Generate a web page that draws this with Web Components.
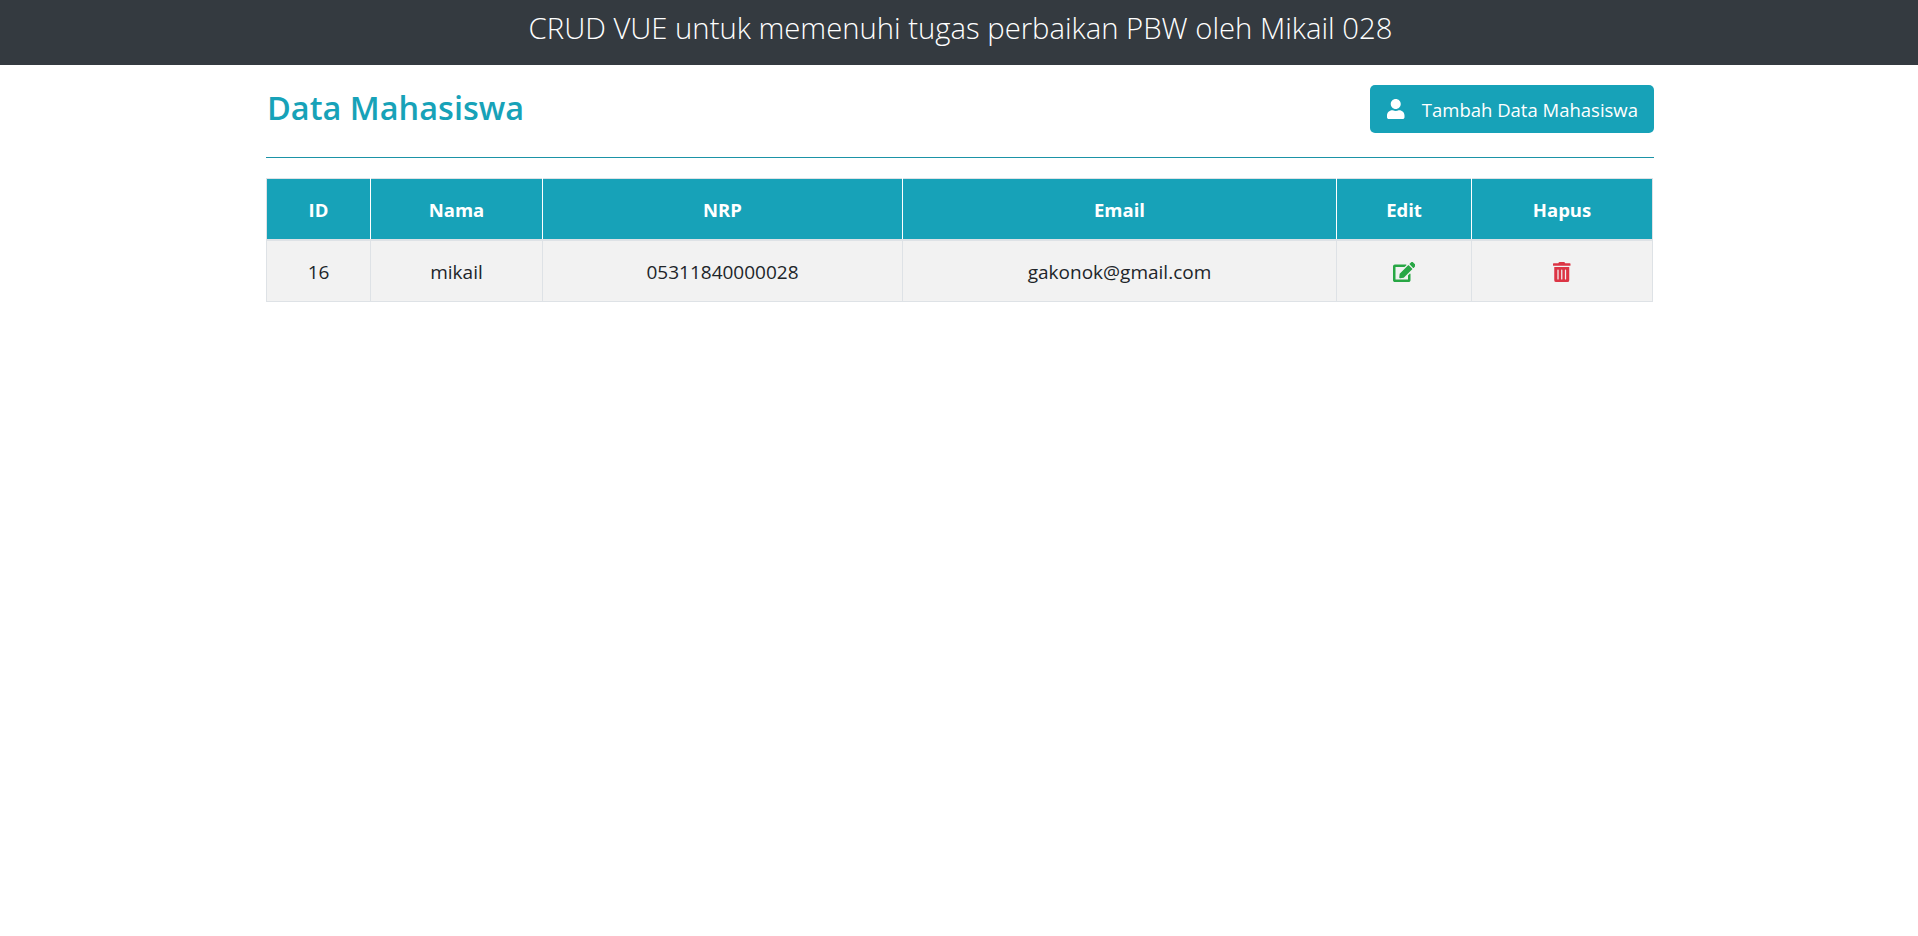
<!DOCTYPE html>
<html>
<head>
<meta charset="utf-8">
<title>CRUD VUE</title>
<style>
  html, body { margin: 0; background: #fff; }
  body { font-family: "Open Sans", "Noto Sans", sans-serif; color: #212529; }
</style>
</head>
<body>
<app-navbar>CRUD VUE untuk memenuhi tugas perbaikan PBW oleh Mikail 028</app-navbar>
<page-main>
  <page-head>
    <span slot="title">Data Mahasiswa</span>
    <add-button>Tambah Data Mahasiswa</add-button>
  </page-head>
  <mhs-table></mhs-table>
</page-main>

<script>
const ICONS = {
  user: ["0 0 448 512", "M224 256c70.7 0 128-57.3 128-128S294.7 0 224 0 96 57.3 96 128s57.3 128 128 128zm89.6 32h-16.7c-22.2 10.2-46.9 16-72.9 16s-50.6-5.8-72.9-16h-16.7C60.2 288 0 348.2 0 422.4V464c0 26.5 21.5 48 48 48h352c26.5 0 48-21.5 48-48v-41.6c0-74.2-60.2-134.4-134.4-134.4z"],
  edit: ["0 0 576 512", "M402.6 83.2l90.2 90.2c3.8 3.8 3.8 10 0 13.8L274.4 405.6l-92.8 10.3c-12.4 1.4-22.9-9.1-21.5-21.5l10.3-92.8L388.8 83.2c3.8-3.8 10-3.8 13.8 0zm162-22.9l-48.8-48.8c-15.2-15.2-39.9-15.2-55.2 0l-35.4 35.4c-3.8 3.8-3.8 10 0 13.8l90.2 90.2c3.8 3.8 10 3.8 13.8 0l35.4-35.4c15.2-15.3 15.2-40 0-55.2zM384 346.2V448H64V128h229.8c3.2 0 6.2-1.3 8.5-3.5l40-40c7.6-7.6 2.2-20.5-8.5-20.5H48C21.5 64 0 85.5 0 112v352c0 26.5 21.5 48 48 48h352c26.5 0 48-21.5 48-48V306.2c0-10.7-12.9-16-20.5-8.5l-40 40c-2.2 2.3-3.5 5.3-3.5 8.5z"],
  trash: ["0 0 448 512", "M32 464a48 48 0 0 0 48 48h288a48 48 0 0 0 48-48V128H32zm272-256a16 16 0 0 1 32 0v224a16 16 0 0 1-32 0zm-96 0a16 16 0 0 1 32 0v224a16 16 0 0 1-32 0zm-96 0a16 16 0 0 1 32 0v224a16 16 0 0 1-32 0zM432 32H312l-9.4-18.7A24 24 0 0 0 281.1 0H166.8a23.72 23.72 0 0 0-21.4 13.3L136 32H16A16 16 0 0 0 0 48v32a16 16 0 0 0 16 16h416a16 16 0 0 0 16-16V48a16 16 0 0 0-16-16z"]
};

function icon(name) {
  const [box, d] = ICONS[name];
  return `<svg viewBox="${box}" height="20" fill="currentColor" aria-hidden="true"><path d="${d}"/></svg>`;
}

class AppNavbar extends HTMLElement {
  constructor() {
    super();
    this.attachShadow({ mode: "open" });
    this.shadowRoot.innerHTML = `
      <style>
        :host {
          display: flex;
          justify-content: center;
          box-sizing: border-box;
          height: 65px;
          padding: 8px 0 0 3px;
          line-height: 40px;
          background: #343a40;
          color: #fff;
          font-size: 29.25px;
          font-weight: 300;
        }
      </style>
      <slot></slot>`;
  }
}

class PageMain extends HTMLElement {
  constructor() {
    super();
    this.attachShadow({ mode: "open" });
    this.shadowRoot.innerHTML = `
      <style>
        :host {
          display: block;
          width: 1388px;
          margin-left: 266px;
          padding-top: 20px;
        }
      </style>
      <slot></slot>`;
  }
}

class PageHead extends HTMLElement {
  constructor() {
    super();
    this.attachShadow({ mode: "open" });
    this.shadowRoot.innerHTML = `
      <style>
        :host {
          display: flex;
          justify-content: space-between;
          align-items: flex-start;
          height: 72px;
          border-bottom: 1px solid #1b93a7;
          margin-bottom: 20px;
          color: #17a2b8;
        }
        .title {
          padding-left: 1px;
          font-size: 32.5px;
          font-weight: 600;
          line-height: 46px;
        }
      </style>
      <div class="title"><slot name="title"></slot></div>
      <slot></slot>`;
  }
}

class AddButton extends HTMLElement {
  constructor() {
    super();
    this.attachShadow({ mode: "open" });
    this.shadowRoot.innerHTML = `
      <style>
        :host {
          display: inline-flex;
          align-items: center;
          gap: 17px;
          box-sizing: border-box;
          height: 48px;
          padding: 0 16px 0 17px;
          border-radius: 5px;
          background: #17a2b8;
          color: #fff;
          font-size: 18.5px;
          cursor: pointer;
        }
      </style>
      ${icon("user")}<slot></slot>`;
  }
}

class MhsTable extends HTMLElement {
  constructor() {
    super();
    this.attachShadow({ mode: "open" });
    const heads = ["ID", "Nama", "NRP", "Email", "Edit", "Hapus"];
    const row = { id: 16, nama: "mikail", nrp: "05311840000028", email: "gakonok@gmail.com" };
    this.shadowRoot.innerHTML = `
      <style>
        :host { display: block; width: 1386px; }
        table {
          width: 100%;
          table-layout: fixed;
          border-collapse: collapse;
          font-size: 19px;
          text-align: center;
        }
        th, td { border: 1px solid #dee2e6; padding: 0; vertical-align: middle; }
        th {
          height: 59px;
          padding-top: 1px;
          border-color: #fff;
          border-top-color: #dee2e6;
          border-bottom: 2px solid #dee2e6;
          background: #17a2b8;
          color: #fff;
          font-size: 18.5px;
          font-weight: 700;
        }
        th:first-child { border-left-color: #dee2e6; }
        th:last-child { border-right-color: #dee2e6; }
        td { height: 59px; padding-top: 1px; background: #f2f2f2; }
        td svg { display: block; margin: 0 auto; }
        .edit { color: #28a745; }
        .del { color: #dc3545; }
      </style>
      <table>
        <colgroup>
          <col style="width:104px"><col style="width:172px"><col style="width:360px">
          <col style="width:434px"><col style="width:135px"><col style="width:181px">
        </colgroup>
        <thead><tr>${heads.map(h => `<th>${h}</th>`).join("")}</tr></thead>
        <tbody><tr>
          <td>${row.id}</td><td>${row.nama}</td><td>${row.nrp}</td><td>${row.email}</td>
          <td class="edit">${icon("edit")}</td><td class="del">${icon("trash")}</td>
        </tr></tbody>
      </table>`;
  }
}

customElements.define("app-navbar", AppNavbar);
customElements.define("page-main", PageMain);
customElements.define("page-head", PageHead);
customElements.define("add-button", AddButton);
customElements.define("mhs-table", MhsTable);
</script>
</body>
</html>
